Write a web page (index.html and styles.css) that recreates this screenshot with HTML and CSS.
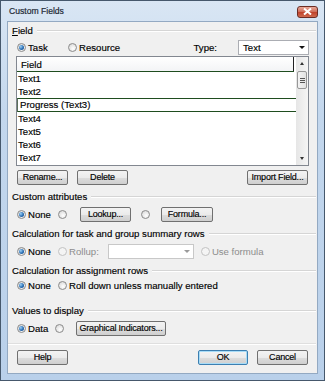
FILE: index.html
```html
<!DOCTYPE html>
<html lang="en">
<head>
    <meta charset="UTF-8">
    <title>Custom Fields</title>
    <link rel="stylesheet" href="styles.css">
</head>
<body>
    <div class="window">
        <div class="titlebar">
            <span class="title">Custom Fields</span>
            <span class="close">
                <svg width="9" height="7" viewBox="0 0 9 7"><path d="M1 0.5 L8 6.5 M8 0.5 L1 6.5" stroke="#fff" stroke-width="2"/></svg>
            </span>
        </div>
        <div class="client">
            <!-- Field -->
            <div class="group-head"><span><u>F</u>ield</span></div>
            <div class="group-body">
                <div class="row">
                    <label class="opt w51"><span class="radio on"></span>Task</label>
                    <label class="opt"><span class="radio"></span>Resource</label>
                    <span class="type-label">Type:</span>
                    <div class="combo type-combo"><span>Text</span><span class="arrow"></span></div>
                </div>
                <div class="list">
                    <div class="list-body">
                        <div class="list-head"><span>Field</span></div>
                        <div class="item">Text1</div>
                        <div class="item">Text2</div>
                        <div class="item selected">Progress (Text3)</div>
                        <div class="item">Text4</div>
                        <div class="item">Text5</div>
                        <div class="item">Text6</div>
                        <div class="item">Text7</div>
                        <div class="item">Text8</div>
                    </div>
                    <div class="scrollbar">
                        <span class="sb-up"></span>
                        <span class="sb-thumb"><i></i><i></i><i></i></span>
                        <span class="sb-down"></span>
                    </div>
                </div>
                <div class="row btn-row">
                    <button class="btn w51">Rename...</button>
                    <button class="btn w51 ml9">Delete</button>
                    <button class="btn import">Import Field...</button>
                </div>
            </div>

            <!-- Custom attributes -->
            <div class="group-head gap7"><span>Custom attributes</span></div>
            <div class="group-body">
                <div class="row gap5">
                    <label class="opt w41"><span class="radio on"></span>None</label>
                    <span class="radio"></span>
                    <button class="btn lookup">Lookup...</button>
                    <span class="radio ml10"></span>
                    <button class="btn formula">Formula...</button>
                </div>
            </div>

            <!-- Calculation for task and group summary rows -->
            <div class="group-head gap7"><span>Calculation for task and group summary rows</span></div>
            <div class="group-body">
                <div class="row gap5">
                    <label class="opt w41"><span class="radio on"></span>None</label>
                    <label class="opt off"><span class="radio dis"></span>Rollup:</label>
                    <div class="combo rollup-combo"><span></span><span class="arrow grey"></span></div>
                    <label class="opt off use-formula"><span class="radio dis"></span>Use formula</label>
                </div>
            </div>

            <!-- Calculation for assignment rows -->
            <div class="group-head gap7"><span>Calculation for assignment rows</span></div>
            <div class="group-body">
                <div class="row gap2">
                    <label class="opt w41"><span class="radio on"></span>None</label>
                    <label class="opt"><span class="radio"></span>Roll down unless manually entered</label>
                </div>
            </div>

            <!-- Values to display -->
            <div class="group-head gap13"><span>Values to display</span></div>
            <div class="group-body">
                <div class="row gap5">
                    <label class="opt w38"><span class="radio on"></span>Data</label>
                    <span class="radio"></span>
                    <button class="btn graphical">Graphical Indicators...</button>
                </div>
            </div>

            <div class="separator"></div>

            <div class="group-body">
                <div class="row footer">
                    <button class="btn w51">Help</button>
                    <button class="btn ok">OK</button>
                    <button class="btn w51 ml9">Cancel</button>
                </div>
            </div>
        </div>
    </div>
</body>
</html>
```

FILE: styles.css
```css
body {
    margin: 0;
    padding: 0;
    font-family: "Liberation Sans", Arial, sans-serif;
    font-size: 9.6px;
    color: #000;
    background: #fff;
}
.window {
    width: 325px;
    height: 381px;
    box-sizing: border-box;
    border: 1px solid #46586c;
    background: linear-gradient(#d9e6f4, #c3d7ed 30%, #b9d0ea);
}
.titlebar {
    height: 20px;
    display: flex;
    align-items: center;
    padding-left: 8px;
}
.title {
    font-size: 8.6px;
    color: #1e2a36;
    -webkit-text-stroke: 0.2px #1e2a36;
}
.close {
    margin-left: auto;
    margin-right: 6px;
    margin-top: 1px;
    width: 21px;
    height: 12px;
    box-sizing: border-box;
    border: 1px solid #6b2d25;
    border-radius: 3px;
    background: linear-gradient(#e9a99a, #d0705c 45%, #c0432c 55%, #cf6a4f);
    display: flex;
    align-items: center;
    justify-content: center;
}
.client {
    margin: 0 6px;
    width: 311px;
    height: 353px;
    box-sizing: border-box;
    border: 1px solid #93a9c2;
    background: #f0f0f0;
    padding: 0 1px 7px 0;
    -webkit-text-stroke: 0.15px #000;
}
/* group headers with the etched line */
.group-head {
    height: 10px;
    margin-top: 4px;
    padding-left: 4px;
    display: flex;
    align-items: center;
    line-height: 10px;
}
.group-head::after {
    content: "";
    flex-grow: 1;
    margin-left: 4px;
    border-top: 1px solid #d5d5d5;
    border-bottom: 1px solid #fff;
}
.gap7 { margin-top: 7px; }
.gap13 { margin-top: 13px; }
.group-body {
    padding: 0 8px 0 9px;
}
.row {
    height: 15px;
    margin-top: 4px;
    display: flex;
    align-items: center;
}
.gap5 { margin-top: 5px; }
.gap2 { margin-top: 2px; }
.opt {
    display: flex;
    align-items: center;
    white-space: nowrap;
}
.opt.off {
    color: #8d8d8d;
    -webkit-text-stroke: 0;
}
.w51 { width: 51px; }
.w41 { width: 41px; }
.w38 { width: 38px; }
.ml9 { margin-left: 9px; }
.ml10 { margin-left: 10px; }
.radio {
    width: 9px;
    height: 9px;
    flex-shrink: 0;
    box-sizing: border-box;
    border: 1px solid #8b8b8b;
    border-radius: 50%;
    background: radial-gradient(circle at 60% 65%, #fff, #e0e0e0 70%, #cfcfcf);
    margin-right: 2px;
    display: flex;
    align-items: center;
    justify-content: center;
}
.radio.on::after {
    content: "";
    width: 5px;
    height: 5px;
    border-radius: 50%;
    background: radial-gradient(circle at 35% 35%, #9fd2f6, #2a6fb5 55%, #153f73);
}
.radio.dis {
    border-color: #c2c2c2;
    background: #f4f4f4;
}
.type-label {
    margin-left: auto;
}
.combo {
    height: 15px;
    box-sizing: border-box;
    border: 1px solid #abadb3;
    background: #fff;
    display: flex;
    align-items: center;
    padding-left: 4px;
}
.type-combo {
    width: 71px;
    margin-left: 21px;
    margin-right: -1px;
}
.arrow {
    margin-left: auto;
    margin-right: 3px;
    width: 0;
    height: 0;
    border-left: 3px solid transparent;
    border-right: 3px solid transparent;
    border-top: 3px solid #111;
}
.arrow.grey {
    border-top-color: #9a9a9a;
}
.rollup-combo {
    width: 86px;
    margin-left: 9px;
    border-color: #c8c8c8;
}
.use-formula {
    margin-left: 7px;
}
/* field list */
.list {
    margin: 1px -1px 0 -1px;
    height: 110px;
    box-sizing: border-box;
    border: 1px solid #828790;
    background: #fff;
    display: flex;
    overflow: hidden;
}
.list-body {
    flex-grow: 1;
    overflow: hidden;
}
.list-head {
    height: 15px;
    box-sizing: border-box;
    border-bottom: 1px solid #1f4d1f;
    background: linear-gradient(#fff, #f3f4f6);
    display: flex;
    align-items: center;
    padding-left: 4px;
    margin-right: 2px;
    position: relative;
}
.list-head::after {
    content: "";
    position: absolute;
    right: 0;
    top: 0;
    height: 14px;
    border-left: 1px solid #222;
}
.item {
    height: 13px;
    line-height: 13px;
    padding-left: 1px;
    white-space: nowrap;
}
.item.selected {
    height: 14px;
    box-sizing: border-box;
    border-top: 1px solid #1f4d1f;
    border-bottom: 1px solid #1f4d1f;
    border-left: 1px solid #5a6f5a;
    line-height: 12px;
    padding-left: 2px;
}
.scrollbar {
    width: 12px;
    flex-shrink: 0;
    background: linear-gradient(90deg, #e6e6e6, #f5f5f5);
    display: flex;
    flex-direction: column;
    align-items: center;
}
.sb-up, .sb-down {
    width: 0;
    height: 0;
    border-left: 2.5px solid transparent;
    border-right: 2.5px solid transparent;
}
.sb-up {
    margin-top: 5px;
    border-bottom: 3px solid #333;
}
.sb-down {
    margin-top: auto;
    margin-bottom: 5px;
    border-top: 3px solid #333;
}
.sb-thumb {
    margin-top: 6px;
    width: 10px;
    height: 18px;
    box-sizing: border-box;
    border: 1px solid #979797;
    border-radius: 2px;
    background: linear-gradient(90deg, #f3f3f3, #e2e2e2);
    display: flex;
    flex-direction: column;
    align-items: center;
    justify-content: center;
    gap: 1px;
}
.sb-thumb i {
    width: 5px;
    height: 1px;
    background: #555;
}
/* buttons */
.btn {
    height: 15px;
    box-sizing: border-box;
    padding: 0;
    border: 1px solid #707070;
    border-radius: 2px;
    background: linear-gradient(#f3f3f3, #ebebeb 50%, #dddddd 51%, #cfcfcf);
    font-family: inherit;
    font-size: 9px;
    letter-spacing: -0.2px;
    line-height: 13px;
    color: #000;
    text-align: center;
    white-space: nowrap;
    overflow: hidden;
    -webkit-text-stroke: 0.15px #000;
}
.import {
    width: 61px;
    margin-left: auto;
}
.lookup {
    width: 51px;
    margin-left: 11px;
}
.formula {
    width: 52px;
    margin-left: 9px;
}
.graphical {
    width: 90px;
    margin-left: 10px;
}
.ok {
    width: 50px;
    margin-left: auto;
    border-color: #3c7fb1;
    box-shadow: inset 0 0 0 1px #a8dcf7;
}
.separator {
    margin-top: 7px;
    height: 0;
    border-top: 1px solid #dfdfdf;
    border-bottom: 1px solid #fff;
}
.footer {
    margin-top: 5px;
}
```
